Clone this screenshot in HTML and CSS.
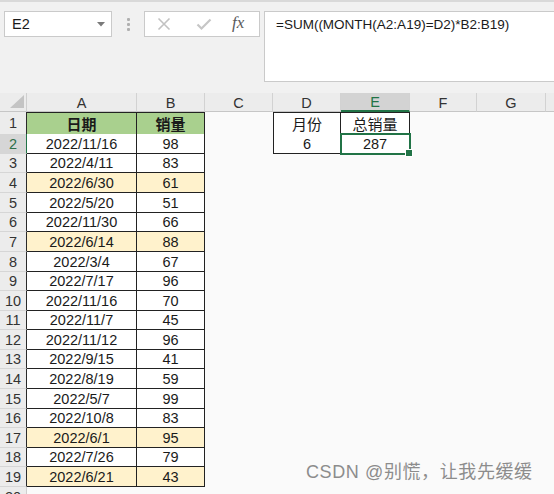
FILE: index.html
```html
<!DOCTYPE html>
<html>
<head>
<meta charset="utf-8">
<link rel="stylesheet" href="styles.css">
</head>
<body>
<div class="app">
  <div class="toolbar">
    <div class="namebox"><span>E2</span><svg class="drop" width="8" height="5" viewBox="0 0 8 5"><path d="M0 0H8L4 4.5Z" fill="#7a7a7a"/></svg></div>
    <div class="grip"><i></i><i></i><i></i></div>
    <div class="fxbox">
      <svg class="ic" width="14" height="14" viewBox="0 0 14 14"><path d="M1.5 1.5L12.5 12.5M12.5 1.5L1.5 12.5" stroke="#c2c2c2" stroke-width="1.6" fill="none"/></svg>
      <svg class="ic" width="16" height="14" viewBox="0 0 16 14"><path d="M1.5 7.5L5.5 11.5L14.5 2.5" stroke="#c6c6c6" stroke-width="2.2" fill="none"/></svg>
      <span class="fx">fx</span>
    </div>
    <div class="formula">=SUM((MONTH(A2:A19)=D2)*B2:B19)</div>
  </div>

  <div class="sheet">
    <div class="row hdr">
      <div class="corner"><svg width="14" height="13" viewBox="0 0 14 13"><path d="M14 0V13H0Z" fill="#c4c4c4"/></svg></div>
      <div class="ch">A</div><div class="ch">B</div><div class="ch">C</div><div class="ch">D</div><div class="ch on">E</div><div class="ch">F</div><div class="ch">G</div><div class="ch last"></div>
    </div>
    <div class="row r1">
      <div class="rh">1</div><div class="c t g top bold">日期</div><div class="c t g top bold">销量</div><div class="c"></div><div class="c t top dl">月份</div><div class="c t top">总销量</div><div class="c"></div><div class="c"></div><div class="c"></div>
    </div>
    <div class="row">
      <div class="rh on">2</div><div class="c t">2022/11/16</div><div class="c t">98</div><div class="c"></div><div class="c t dl">6</div><div class="c t sel">287</div><div class="c"></div><div class="c"></div><div class="c"></div>
    </div>
    <div class="row s"><div class="rh">3</div><div class="c t">2022/4/11</div><div class="c t">83</div><div class="c"></div><div class="c"></div><div class="c"></div><div class="c"></div><div class="c"></div><div class="c"></div></div>
    <div class="row"><div class="rh">4</div><div class="c t y">2022/6/30</div><div class="c t y">61</div><div class="c"></div><div class="c"></div><div class="c"></div><div class="c"></div><div class="c"></div><div class="c"></div></div>
    <div class="row"><div class="rh">5</div><div class="c t">2022/5/20</div><div class="c t">51</div><div class="c"></div><div class="c"></div><div class="c"></div><div class="c"></div><div class="c"></div><div class="c"></div></div>
    <div class="row s"><div class="rh">6</div><div class="c t">2022/11/30</div><div class="c t">66</div><div class="c"></div><div class="c"></div><div class="c"></div><div class="c"></div><div class="c"></div><div class="c"></div></div>
    <div class="row"><div class="rh">7</div><div class="c t y">2022/6/14</div><div class="c t y">88</div><div class="c"></div><div class="c"></div><div class="c"></div><div class="c"></div><div class="c"></div><div class="c"></div></div>
    <div class="row"><div class="rh">8</div><div class="c t">2022/3/4</div><div class="c t">67</div><div class="c"></div><div class="c"></div><div class="c"></div><div class="c"></div><div class="c"></div><div class="c"></div></div>
    <div class="row s"><div class="rh">9</div><div class="c t">2022/7/17</div><div class="c t">96</div><div class="c"></div><div class="c"></div><div class="c"></div><div class="c"></div><div class="c"></div><div class="c"></div></div>
    <div class="row"><div class="rh">10</div><div class="c t">2022/11/16</div><div class="c t">70</div><div class="c"></div><div class="c"></div><div class="c"></div><div class="c"></div><div class="c"></div><div class="c"></div></div>
    <div class="row s"><div class="rh">11</div><div class="c t">2022/11/7</div><div class="c t">45</div><div class="c"></div><div class="c"></div><div class="c"></div><div class="c"></div><div class="c"></div><div class="c"></div></div>
    <div class="row"><div class="rh">12</div><div class="c t">2022/11/12</div><div class="c t">96</div><div class="c"></div><div class="c"></div><div class="c"></div><div class="c"></div><div class="c"></div><div class="c"></div></div>
    <div class="row s"><div class="rh">13</div><div class="c t">2022/9/15</div><div class="c t">41</div><div class="c"></div><div class="c"></div><div class="c"></div><div class="c"></div><div class="c"></div><div class="c"></div></div>
    <div class="row"><div class="rh">14</div><div class="c t">2022/8/19</div><div class="c t">59</div><div class="c"></div><div class="c"></div><div class="c"></div><div class="c"></div><div class="c"></div><div class="c"></div></div>
    <div class="row"><div class="rh">15</div><div class="c t">2022/5/7</div><div class="c t">99</div><div class="c"></div><div class="c"></div><div class="c"></div><div class="c"></div><div class="c"></div><div class="c"></div></div>
    <div class="row s"><div class="rh">16</div><div class="c t">2022/10/8</div><div class="c t">83</div><div class="c"></div><div class="c"></div><div class="c"></div><div class="c"></div><div class="c"></div><div class="c"></div></div>
    <div class="row"><div class="rh">17</div><div class="c t y">2022/6/1</div><div class="c t y">95</div><div class="c"></div><div class="c"></div><div class="c"></div><div class="c"></div><div class="c"></div><div class="c"></div></div>
    <div class="row s"><div class="rh">18</div><div class="c t">2022/7/26</div><div class="c t">79</div><div class="c"></div><div class="c"></div><div class="c"></div><div class="c"></div><div class="c"></div><div class="c"></div></div>
    <div class="row"><div class="rh">19</div><div class="c t y">2022/6/21</div><div class="c t y">43</div><div class="c"></div><div class="c"></div><div class="c"></div><div class="c"></div><div class="c"></div><div class="c"></div></div>
    <div class="row"><div class="rh last">20</div><div class="c"></div><div class="c"></div><div class="c"></div><div class="c"></div><div class="c"></div><div class="c"></div><div class="c"></div><div class="c"></div></div>
  </div>

  <div class="watermark">CSDN @别慌，让我先缓缓</div>
</div>
</body>
</html>
```

FILE: styles.css
```css
* { box-sizing: border-box; }
html, body { margin: 0; padding: 0; }
body {
  background: #fafafa;
  font-family: "Liberation Sans", "Noto Sans CJK SC", sans-serif;
  color: #1a1a1a;
  overflow: hidden;
}
.app { position: relative; width: 554px; height: 494px; overflow: hidden; }

.toolbar {
  height: 93px;
  background: #f1f1f1;
  border-top: 2px solid #d9d9d9;
  display: flex;
  align-items: flex-start;
  padding: 9px 0 0 4px;
}
.namebox {
  width: 108px;
  height: 26px;
  background: #fff;
  border: 1px solid #cacaca;
  display: flex;
  align-items: center;
  justify-content: space-between;
  padding: 0 6px 0 7px;
  font-size: 14.5px;
  color: #1a1a1a;
}
.drop { margin-top: 1px; }
.grip {
  width: 32px;
  height: 26px;
  display: flex;
  flex-direction: column;
  align-items: center;
  justify-content: center;
  gap: 2px;
}
.grip i { display: block; width: 3px; height: 3px; background: #b0b0b0; border-radius: 1px; }
.fxbox {
  width: 116px;
  height: 26px;
  background: #fff;
  border: 1px solid #cacaca;
  display: flex;
  align-items: center;
  padding: 0 0 0 12px;
}
.fxbox .ic:first-child { margin-right: 25px; }
.fxbox .ic:nth-child(2) { margin-right: 20px; }
.fx {
  font-family: "Liberation Serif", "DejaVu Serif", serif;
  font-style: italic;
  font-size: 17px;
  color: #5a5a5a;
  margin-top: -2px;
}
.formula {
  margin-left: 4px;
  flex: 1;
  height: 71px;
  background: #fff;
  border: 1px solid #cacaca;
  border-right: none;
  padding: 4px 11px;
  font-size: 13.5px;
  line-height: 18px;
  color: #1a1a1a;
}

.sheet { background: #fafafa; }
.row {
  display: grid;
  grid-template-columns: 27px 110px 68px 68px 68px 69px 67px 69px 1fr;
  height: 20px;
}
.row.s { height: 19px; }
.row.hdr { height: 19px; }
.row.r1 { height: 22px; }

.corner {
  background: #ececec;
  border-right: 1px solid #cfcfcf;
  border-bottom: 1px solid #c6c6c6;
  display: flex;
  align-items: flex-end;
  justify-content: flex-end;
  padding: 0 2px 3px 0;
}
.ch {
  background: #ececec;
  border-right: 1px solid #d2d2d2;
  border-bottom: 1px solid #c6c6c6;
  font-size: 14.5px;
  color: #333;
  display: flex;
  align-items: center;
  justify-content: center;
  padding-top: 1px;
}
.ch.on { background: #d3d3d3; color: #217346; border-bottom: 2px solid #217346; }
.ch.last { border-right: none; }

.rh {
  background: #ececec;
  border-right: 1px solid #2a2a2a;
  border-bottom: 1px solid #d6d6d6;
  font-size: 14.5px;
  color: #333;
  display: flex;
  align-items: center;
  justify-content: center;
}
.rh.on { background: #d6d6d6; color: #2f6f4a; border-right-color: #217346; }
.rh.last { border-right-color: #cfcfcf; }

.c {
  font-size: 14.5px;
  color: #1a1a1a;
  display: flex;
  align-items: center;
  justify-content: center;
  white-space: nowrap;
}
.t {
  background: #fff;
  border-right: 1px solid #222;
  border-bottom: 1px solid #222;
}
.t.top { border-top: 1px solid #222; }
.t.dl { border-left: 1px solid #222; }
.g { background: #a9d08e; }
.y { background: #fff2cc; }
.bold { font-weight: bold; font-size: 15px; }
.r1 .c { font-size: 15px; }

.sel {
  position: relative;
  z-index: 1;
  outline: 2px solid #217346;
  outline-offset: -1px;
}
.sel::after {
  content: "";
  position: absolute;
  right: -4px;
  bottom: -4px;
  width: 6px;
  height: 6px;
  background: #217346;
  border: 1px solid #fff;
}

.watermark {
  position: absolute;
  left: 306px;
  top: 461px;
  font-size: 18px;
  line-height: 22px;
  color: #8c8c8c;
  letter-spacing: 0.6px;
  text-shadow: 0 0 1px rgba(255,255,255,0.6);
  white-space: nowrap;
}
```
